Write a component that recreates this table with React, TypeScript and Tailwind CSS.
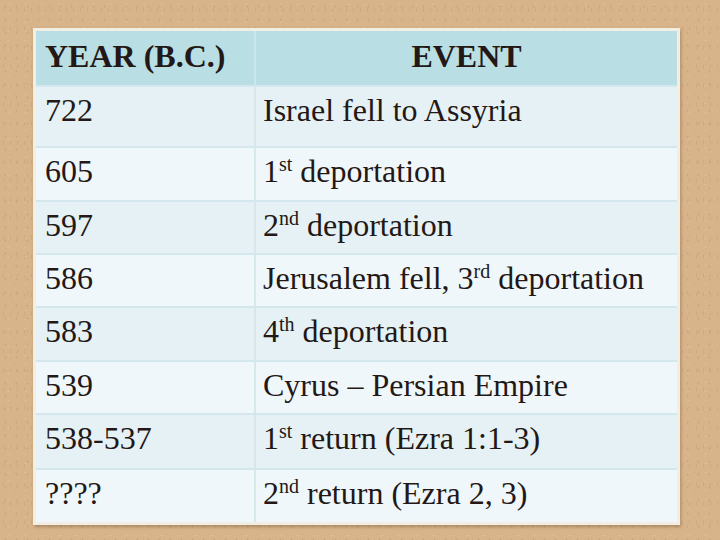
const rows = [
  { year: '722', event: ['Israel fell to Assyria'], h: 'h-[61px]', tint: 'bg-[#e5f1f4]' },
  { year: '605', event: ['1', 'st', ' deportation'], h: 'h-[54px]', tint: 'bg-[#f0f7fa]' },
  { year: '597', event: ['2', 'nd', ' deportation'], h: 'h-[53px]', tint: 'bg-[#e5f1f4]' },
  { year: '586', event: ['Jerusalem fell, 3', 'rd', ' deportation'], h: 'h-[53px]', tint: 'bg-[#f0f7fa]' },
  { year: '583', event: ['4', 'th', ' deportation'], h: 'h-[54px]', tint: 'bg-[#e5f1f4]' },
  { year: '539', event: ['Cyrus – Persian Empire'], h: 'h-[53px]', tint: 'bg-[#f0f7fa]' },
  { year: '538-537', event: ['1', 'st', ' return (Ezra 1:1-3)'], h: 'h-[55px]', tint: 'bg-[#e5f1f4]' },
  { year: '????', event: ['2', 'nd', ' return (Ezra 2, 3)'], h: 'h-[54px]', tint: 'bg-[#f0f7fa]' },
];

function Event({ parts }: { parts: string[] }) {
  if (parts.length === 1) return <>{parts[0]}</>;
  return (
    <>
      {parts[0]}
      <span className="relative top-[-11px] text-[20px]">{parts[1]}</span>
      {parts[2]}
    </>
  );
}

export default function App() {
  return (
    <div className="w-[720px] h-[540px] overflow-hidden bg-[#d8b48b] bg-[radial-gradient(#c9a47b_0.6px,transparent_1.1px),radial-gradient(#e0c19b_0.7px,transparent_1.2px),radial-gradient(#cfaa80_0.5px,transparent_1px)] bg-[length:11px_13px,17px_9px,7px_19px] pt-[28px] pl-[33px]">
      <div className="w-[647px] h-[497px] bg-[#f3eee4] p-[3px] shadow-[1px_2px_3px_rgba(90,60,30,0.35)]">
        <div className="w-[641px] text-[#231815] text-[32px] leading-[38px] font-[family-name:Liberation_Serif,Times_New_Roman,serif]">
          <div className="grid grid-cols-[220px_1fr] h-[54px] bg-[#b9dee3] font-bold">
            <div className="pl-[9px] pt-[6px] border-r-2 border-[#c9e6ea]">YEAR (B.C.)</div>
            <div className="pt-[6px] text-center">EVENT</div>
          </div>
          {rows.map((r) => (
            <div
              key={r.year}
              className={`grid grid-cols-[220px_1fr] border-t-2 border-[#d3e7ec] ${r.h} ${r.tint}`}
            >
              <div className="pl-[9px] pt-[4px] border-r-2 border-[#d6e8ed]">{r.year}</div>
              <div className="pl-[7px] pt-[4px] whitespace-nowrap">
                <Event parts={r.event} />
              </div>
            </div>
          ))}
        </div>
      </div>
    </div>
  );
}
